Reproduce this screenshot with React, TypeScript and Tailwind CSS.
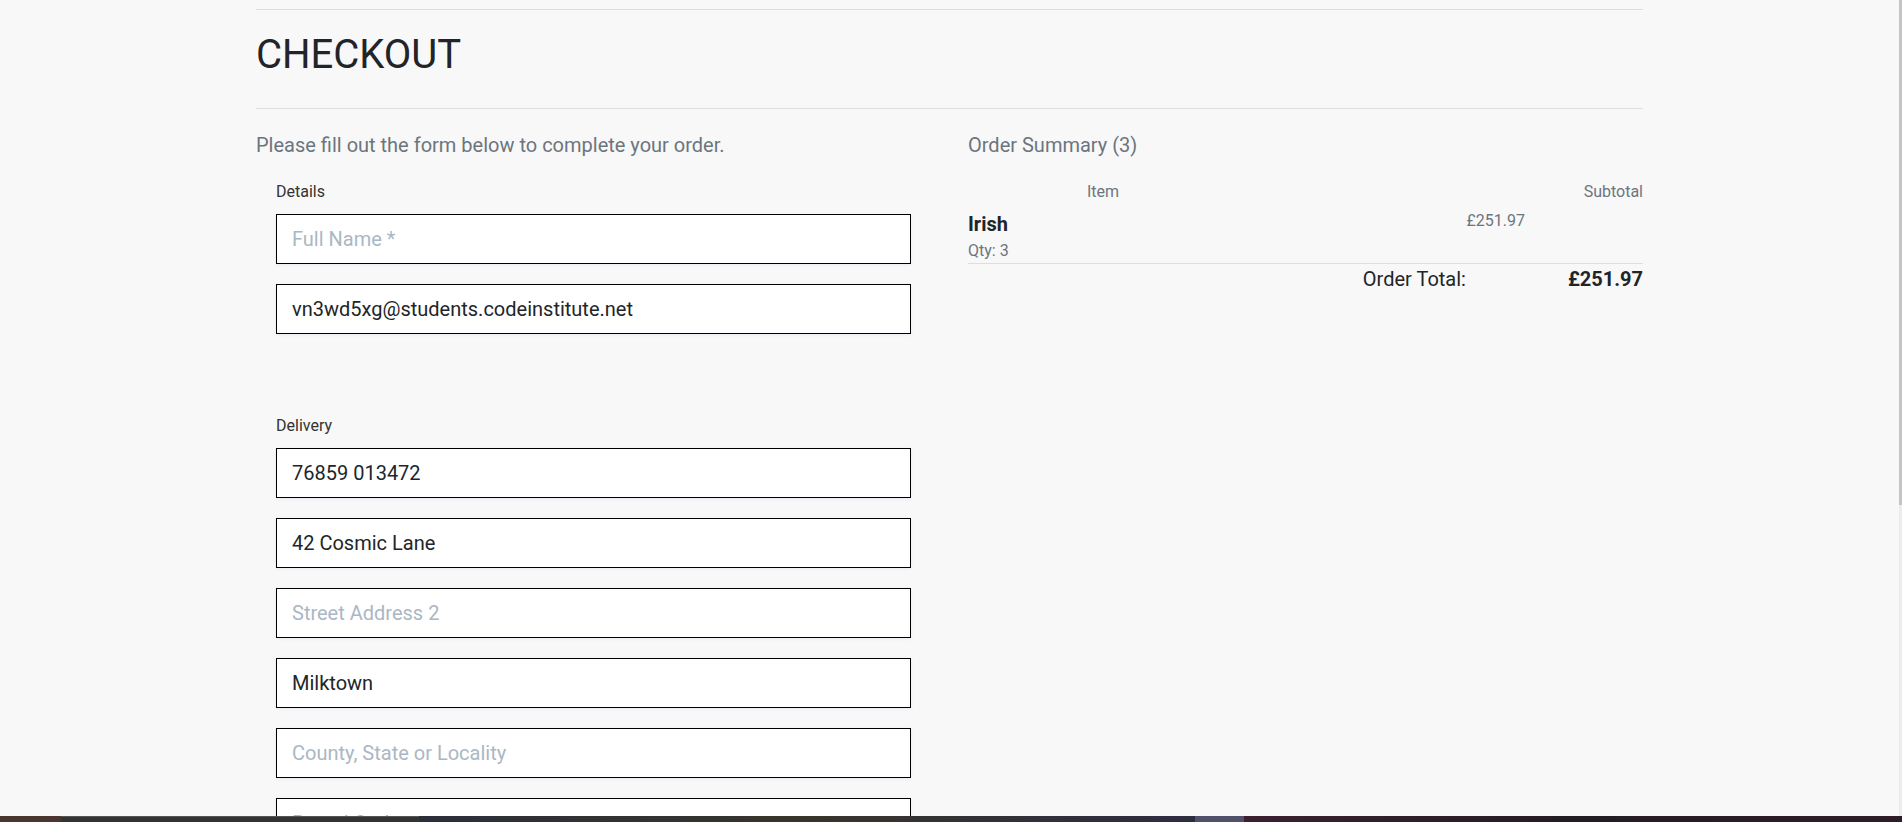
import React from "react"

const detailFields = [
  { placeholder: "Full Name *", value: "" },
  { placeholder: "Email Address *", value: "vn3wd5xg@students.codeinstitute.net" },
]

const deliveryFields = [
  { placeholder: "Phone Number *", value: "76859 013472" },
  { placeholder: "Street Address 1 *", value: "42 Cosmic Lane" },
  { placeholder: "Street Address 2", value: "" },
  { placeholder: "Town or City *", value: "Milktown" },
  { placeholder: "County, State or Locality", value: "" },
  { placeholder: "Postal Code", value: "" },
]

function Field({ placeholder, value }: { placeholder: string; value: string }) {
  return (
    <input
      readOnly
      defaultValue={value}
      placeholder={placeholder}
      className="block w-full h-[50px] mb-5 px-[15px] bg-white border border-black rounded-none text-[20px] text-[#212529] placeholder:text-[#aab7c4] shadow-[0_1px_3px_0_#e6ebf1] outline-none"
    />
  )
}

export default function App() {
  return (
    <div className="h-screen overflow-hidden bg-[#f8f8f8] font-['Roboto','Liberation_Sans',sans-serif] text-[#212529]">
      <div className="w-[1387px] ml-[256px] pt-[9px]">
        <hr className="border-0 border-t border-[#dedede] mb-[21px]" />
        <h2 className="text-[40px] leading-[48px] font-normal uppercase">Checkout</h2>
        <hr className="border-0 border-t border-[#dedede] mt-[29px] mb-[21px]" />

        <div className="flex">
          <div className="w-[712px] shrink-0">
            <p className="text-[20px] leading-[30px] text-[#6c757d] mb-5">
              Please fill out the form below to complete your order.
            </p>
            <fieldset className="w-[675px] px-5 mb-[60px]">
              <legend className="text-[16px] leading-[24px] text-[#333] mb-[10px]">Details</legend>
              {detailFields.map((f) => (
                <Field key={f.placeholder} {...f} />
              ))}
            </fieldset>
            <fieldset className="w-[675px] px-5">
              <legend className="text-[16px] leading-[24px] text-[#333] mb-[10px]">Delivery</legend>
              {deliveryFields.map((f) => (
                <Field key={f.placeholder} {...f} />
              ))}
            </fieldset>
          </div>

          <div className="flex-1">
            <p className="text-[20px] leading-[30px] text-[#6c757d] mb-5">Order Summary (3)</p>
            <div className="flex text-[16px] leading-[24px] text-[#6c757d] mb-[5px]">
              <p className="w-[270px] text-center">Item</p>
              <p className="flex-1 text-right">Subtotal</p>
            </div>
            <div className="flex justify-between pr-[118px]">
              <div>
                <p className="text-[20px] leading-[30px] font-bold">Irish</p>
                <p className="text-[16px] leading-[24px] text-[#6c757d]">Qty: 3</p>
              </div>
              <p className="text-[16px] leading-[24px] text-[#6c757d]">£251.97</p>
            </div>
            <hr className="border-0 border-t border-[#dedede]" />
            <div className="flex justify-end text-[20px] leading-[30px]">
              <p className="mr-[102px]">Order Total:</p>
              <p className="font-bold">£251.97</p>
            </div>
          </div>
        </div>
      </div>

      {/* overlay scrollbar */}
      <div className="fixed top-0 right-0 bottom-[6px] w-[3px] bg-[#ececec]">
        <div className="h-[505px] bg-[#c4c4c4]" />
      </div>

      {/* desktop taskbar strip */}
      <div className="fixed bottom-0 left-0 right-0 h-[6px] flex">
        <div className="w-[61px] bg-[#4a3631]" />
        <div className="w-[358px] bg-[#333333] border-t border-[#555]" />
        <div className="w-[776px] bg-gradient-to-r from-[#2b2f38] via-[#38342c] to-[#2e2c40]" />
        <div className="w-[49px] bg-[#50506a]" />
        <div className="flex-1 bg-gradient-to-r from-[#3a2030] via-[#231c24] to-[#2e1c28]" />
      </div>
    </div>
  )
}
